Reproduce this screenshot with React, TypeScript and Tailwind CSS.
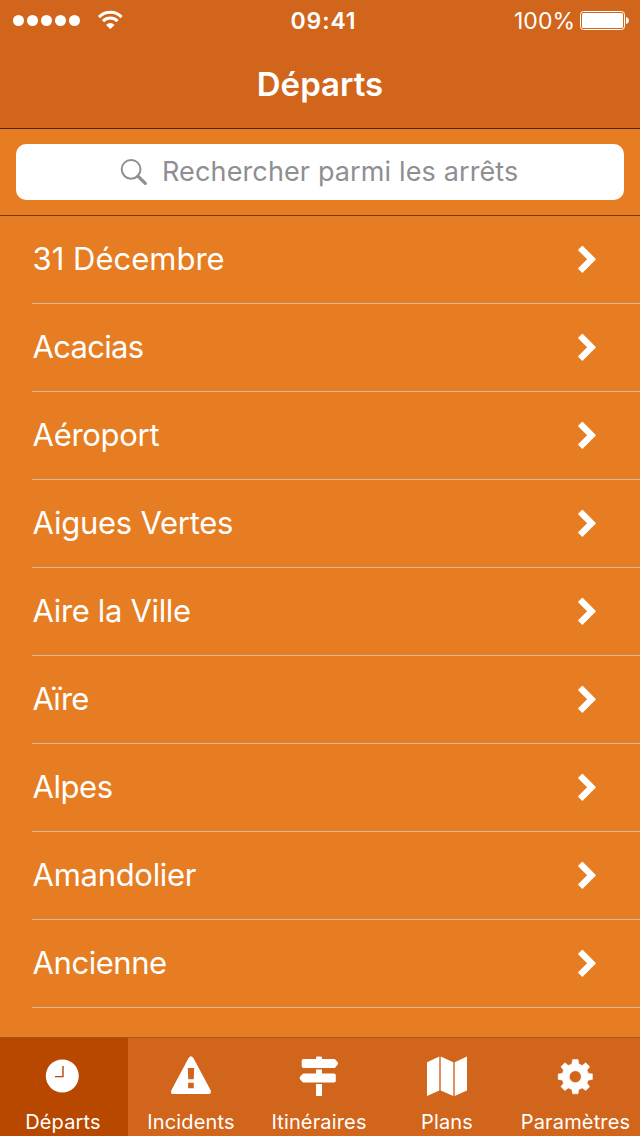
import type { ReactNode } from 'react';

const stops = [
  { name: '31 Décembre', tracking: 'tracking-[0px]' },
  { name: 'Acacias', tracking: 'tracking-[-0.7px]' },
  { name: 'Aéroport', tracking: 'tracking-[-0.3px]' },
  { name: 'Aigues Vertes', tracking: 'tracking-[-0.25px]' },
  { name: 'Aire la Ville', tracking: 'tracking-[-0.35px]' },
  { name: 'Aïre', tracking: 'tracking-[-0.8px]' },
  { name: 'Alpes', tracking: 'tracking-[-0.45px]' },
  { name: 'Amandolier', tracking: 'tracking-[-0.3px]' },
  { name: 'Ancienne', tracking: 'tracking-[-0.45px]' },
];

function WifiIcon() {
  return (
    <svg className="ml-[17px] mt-[10px] h-5 w-[26px]" viewBox="0 0 26 20" fill="none" stroke="#fff">
      <path d="M2 7.1A15.5 15.5 0 0 1 24.6 7.1" strokeWidth="3.1" />
      <path d="M6 11.1A10.3 10.3 0 0 1 20.6 11.1" strokeWidth="3" />
      <path d="M13.3 19L9 14.9A6 6 0 0 1 17.6 14.9Z" fill="#fff" stroke="none" />
    </svg>
  );
}

function BatteryIcon() {
  return (
    <svg className="ml-[5px] mt-[10px] h-[21px] w-[50px]" viewBox="0 0 50 21">
      <rect x="0.5" y="1.5" width="44" height="18" rx="3" fill="none" stroke="#fff" />
      <rect x="2" y="3" width="41" height="15" rx="1.5" fill="#fff" />
      <path d="M46 7C49.8 7.4 49.8 13.6 46 14Z" fill="#fff" />
    </svg>
  );
}

function SearchIcon() {
  return (
    <svg className="h-7 w-7 shrink-0" viewBox="0 0 28 28" fill="none" stroke="#8e8e93">
      <circle cx="11.1" cy="11.3" r="9.4" strokeWidth="2" />
      <path d="M17.9 18.2L25.3 25.3" strokeWidth="3.2" strokeLinecap="round" />
    </svg>
  );
}

function Chevron() {
  return (
    <svg className="mb-px h-7 w-[18px]" viewBox="0 0 18 28" fill="#fff" stroke="#fff" strokeLinejoin="round">
      <path d="M4.4 1.4L17.1 14.2L4.4 27L0.9 23.5L10.1 14.2L0.9 4.9Z" strokeWidth="1.4" />
    </svg>
  );
}

function ClockIcon() {
  return (
    <svg className="h-10 w-10" viewBox="0 0 40 40">
      <circle cx="19.3" cy="20" r="16.5" fill="#fff" />
      <path d="M20 10V20.6H12" fill="none" stroke="#b84800" strokeWidth="1.4" />
    </svg>
  );
}

function WarningIcon() {
  return (
    <svg className="h-10 w-10" viewBox="0 0 40 40">
      <path
        d="M17.6 2Q20-1.4 22.4 2L39.5 34Q41 38 37 38H2.2Q-1 38 .5 34ZM16.8 12L17.2 23.2H22.8L23.2 12ZM17.1 26.8V32.3H22.8V26.8Z"
        fill="#fff"
        fillRule="evenodd"
      />
    </svg>
  );
}

function SignpostIcon() {
  return (
    <svg className="h-10 w-10" viewBox="0 0 40 40" fill="#fff">
      <path d="M17 2Q17 .6 18.4.6H21.6Q23 .6 23 2V3H35Q35.8 3 36.3 3.5L38.7 6.3Q39.5 7.5 38.7 8.6L36.3 11.4Q35.8 12 35 12H4.5Q2.7 12 2.7 10.3V4.8Q2.7 3 4.5 3H17Z" />
      <path d="M17 13.5H23V17.5H35Q36.8 17.5 36.8 19.2V24.8Q36.8 26.5 35 26.5H4.8Q4 26.5 3.5 26L1 23.2Q.2 22 1 20.8L3.5 18.1Q4 17.5 4.8 17.5H17Z" />
      <path d="M17 28H23V40H17Z" />
    </svg>
  );
}

function MapIcon() {
  return (
    <svg className="h-10 w-10" viewBox="0 0 40 40" fill="#fff">
      <path d="M0 6.3L12.3.6V34.5L0 40Z" />
      <path d="M13.7.6L26.3 6.3V40L13.7 34.5Z" />
      <path d="M27.7 6.3L40 .6V34.5L27.7 40Z" />
    </svg>
  );
}

function GearIcon() {
  return (
    <svg className="h-10 w-10" viewBox="0 0 40 40" fill="#fff" stroke="#fff" strokeWidth="0.6" strokeLinejoin="round">
      <path
        fillRule="evenodd"
        d="M16.6 3.6H22L22.7 8L26.3 9.5L29.7 6.8L33.6 10.7L31 14.3L32.3 17.4L36.4 18V23.4L32.3 24L31 27.1L33.6 30.7L29.7 34.6L26.3 31.9L22.7 33.4L22 37.8H16.6L15.9 33.4L12.3 31.9L8.9 34.6L5 30.7L7.6 27.1L6.3 24L2.2 23.4V18L6.3 17.4L7.6 14.3L5 10.7L8.9 6.8L12.3 9.5L15.9 8ZM19.3 14.7A6 6 0 1 0 19.3 26.7A6 6 0 1 0 19.3 14.7Z"
      />
    </svg>
  );
}

const tabs: { label: string; icon: ReactNode; spacing: string }[] = [
  { label: 'Départs', icon: <ClockIcon />, spacing: 'pr-[2px] bg-[#b84800]' },
  { label: 'Incidents', icon: <WarningIcon />, spacing: 'pr-[2px]' },
  { label: 'Itinéraires', icon: <SignpostIcon />, spacing: 'pr-[2px]' },
  { label: 'Plans', icon: <MapIcon />, spacing: 'pr-[2px]' },
  { label: 'Paramètres', icon: <GearIcon />, spacing: 'pr-px' },
];

export default function App() {
  return (
    <div className="flex h-[1136px] w-[640px] flex-col overflow-hidden bg-[#e67d22] font-['Inter',sans-serif] text-white">
      <header className="h-[129px] shrink-0 border-b border-[#4b260a] bg-[#d1651c]">
        <div className="grid h-10 grid-cols-3">
          <div className="flex">
            <div className="ml-[13px] mt-[15px] flex gap-[3px]">
              {[0, 1, 2, 3, 4].map((dot) => (
                <span key={dot} className="size-[11px] rounded-full bg-white" />
              ))}
            </div>
            <WifiIcon />
          </div>
          <div className="pl-[7px] text-center text-[23px] font-semibold leading-[42px] tracking-[0.9px]">09:41</div>
          <div className="flex justify-end pr-[10px]">
            <span className="text-[23px] leading-[42px]">100%</span>
            <BatteryIcon />
          </div>
        </div>
        <h1 className="text-center text-[33px] font-semibold leading-[88px]">Départs</h1>
      </header>

      <div className="h-[87px] shrink-0 border-b border-[#6f3b0e] px-4 pt-[15px]">
        <div className="flex h-14 items-center rounded-[10px] bg-white pl-[104px] text-[#8e8e93]">
          <SearchIcon />
          <span className="ml-[14px] whitespace-nowrap text-[27px] leading-[54px] tracking-[0.13px]">
            Rechercher parmi les arrêts
          </span>
        </div>
      </div>

      <ul className="flex-1 pl-8">
        {stops.map((stop) => (
          <li
            key={stop.name}
            className="flex h-[88px] items-center justify-between border-b border-[#dcb99a] pl-[0.6px] pr-11"
          >
            <span className={`text-[31px] ${stop.tracking}`}>{stop.name}</span>
            <Chevron />
          </li>
        ))}
      </ul>

      <nav className="grid h-[99px] shrink-0 grid-cols-5 border-t border-[#a95717] bg-[#d1651c]">
        {tabs.map((tab) => (
          <div key={tab.label} className={`flex flex-col items-center pt-[18px] ${tab.spacing}`}>
            {tab.icon}
            <span className="mt-[12px] whitespace-nowrap text-[20px] leading-[28px] tracking-[0.15px]">{tab.label}</span>
          </div>
        ))}
      </nav>
    </div>
  );
}
